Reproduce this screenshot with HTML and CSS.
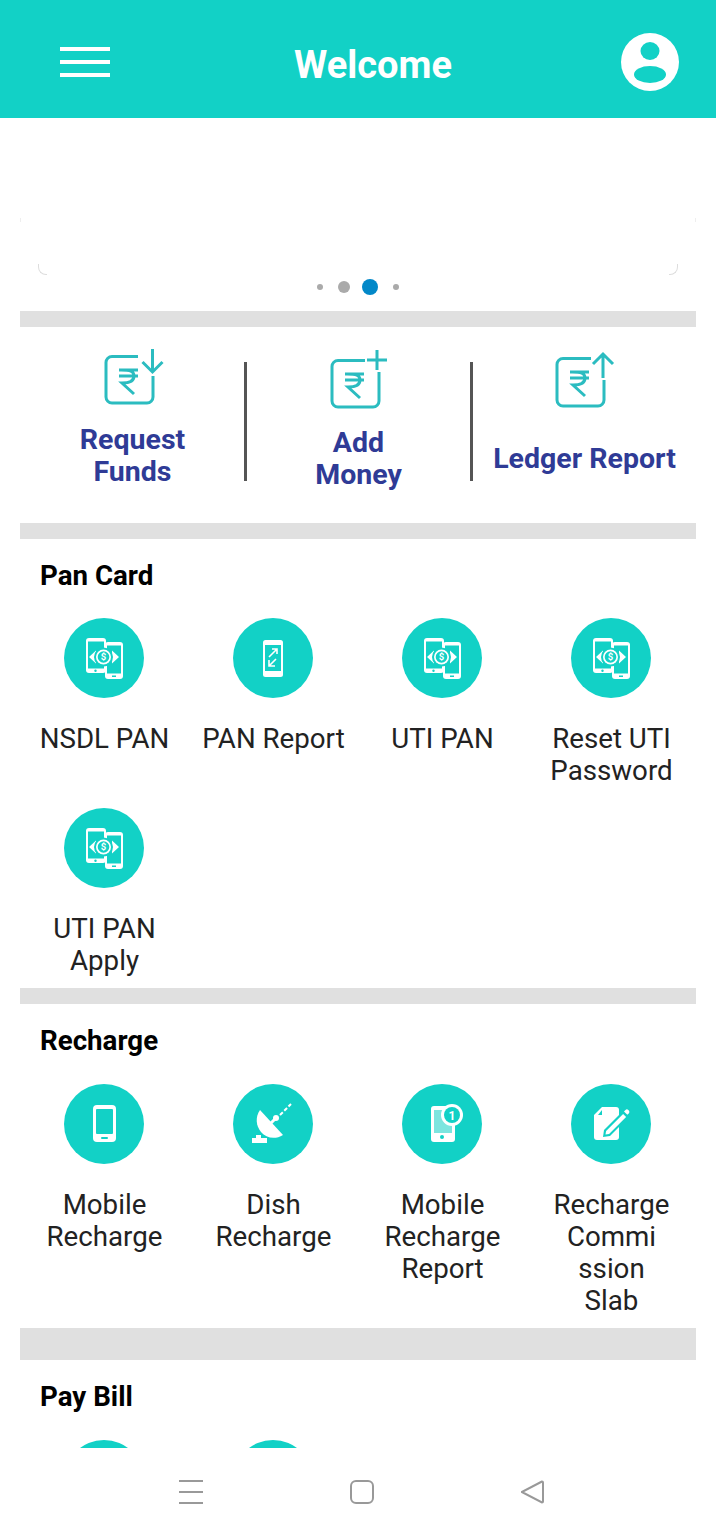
FILE: index.html
```html
<!DOCTYPE html>
<html>
<head>
    <meta http-equiv="Content-Type" content="text/html; charset=utf-8" />
    <title>Welcome</title>
    <link rel="stylesheet" href="styles.css">
</head>
<body>
    <header class="topbar">
        <div class="burger"><span></span><span></span><span></span></div>
        <h1 class="topbar-title">Welcome</h1>
        <svg class="avatar" width="58" height="58" viewBox="0 0 58 58">
            <circle cx="29" cy="29" r="29" fill="#fff" />
            <ellipse cx="29" cy="18" rx="9.500" ry="9" fill="#12d1c6" />
            <ellipse cx="29" cy="41.500" rx="16" ry="8.500" fill="#12d1c6" />
        </svg>
    </header>

    <main class="content">
        <div class="banner">
            <div class="banner-edge"><span></span><span></span></div>
            <div class="banner-corners"><span></span><span></span></div>
            <div class="dots">
                <span class="dot"></span>
                <span class="dot big"></span>
                <span class="dot current"></span>
                <span class="dot"></span>
            </div>
        </div>
        <div class="bar"></div>

        <div class="wallet">
            <div class="wallet-item first">
                <svg class="wallet-ico" width="60" height="60" viewBox="0 0 60 60">
                    <path d="M34 8.500H8a6 6 0 0 0-6 6V49a6 6 0 0 0 6 6h35a6 6 0 0 0 6-6V28" class="line" />
                    <path d="M48.500 1v22M38.500 14l10 10 10-10" class="line" />
                    <path d="M15 22h19M15 28h19M17 22c9 0 13 1 13 6s-5 7-12 7l12 11" class="line" />
                </svg>
                <div class="wallet-name">Request<br>Funds</div>
            </div>
            <div class="wallet-sep"></div>
            <div class="wallet-item second">
                <svg class="wallet-ico" width="60" height="60" viewBox="0 0 60 60">
                    <path d="M35 10.500H8a6 6 0 0 0-6 6V51a6 6 0 0 0 6 6h35a6 6 0 0 0 6-6V22" class="line" />
                    <path d="M47 0v20M37 10h20" class="line" />
                    <path d="M15 24h19M15 30h19M17 24c9 0 13 1 13 6s-5 7-12 7l12 11" class="line" />
                </svg>
                <div class="wallet-name">Add<br>Money</div>
            </div>
            <div class="wallet-sep"></div>
            <div class="wallet-item third">
                <svg class="wallet-ico" width="60" height="60" viewBox="0 0 60 60">
                    <path d="M35 6.500H7a6 6 0 0 0-6 6V48a6 6 0 0 0 6 6h35a6 6 0 0 0 6-6V28" class="line" />
                    <path d="M47 26V2M37 12L47 2l10 10" class="line" />
                    <path d="M14 20h19M14 26h19M16 20c9 0 13 1 13 6s-5 7-12 7l12 11" class="line" />
                </svg>
                <div class="wallet-name">Ledger Report</div>
            </div>
        </div>
        <div class="bar"></div>

        <section class="group">
            <h2 class="group-title">Pan Card</h2>
            <ul class="tiles">
                <li>
                    <span class="tile-ico">
                        <svg width="80" height="80" viewBox="0 0 80 80">
                            <rect x="22" y="20" width="20" height="35" rx="3" fill="#fff" />
                            <rect x="24" y="23.500" width="16" height="27" fill="#12d1c6" />
                            <circle cx="31.500" cy="52.800" r="1.200" fill="#12d1c6" />
                            <rect x="41" y="24" width="18" height="37" rx="3" fill="#fff" />
                            <rect x="43" y="27.500" width="14" height="28" fill="#12d1c6" />
                            <rect x="48" y="57.500" width="4" height="1.500" fill="#12d1c6" />
                            <path d="M25 39l7-6.500V36h4v6h-4v3.500zM55 39l-7-6.500V36h-4v6h4v3.500z" fill="#fff" />
                            <circle cx="39.500" cy="39" r="9.500" fill="#12d1c6" />
                            <circle cx="39.500" cy="39" r="7.500" fill="#fff" />
                            <circle cx="39.500" cy="39" r="5.800" fill="#12d1c6" />
                            <text x="39.500" y="42.300" class="ico-text" font-size="9.500">$</text>
                        </svg>
                    </span>NSDL PAN
                </li>
                <li>
                    <span class="tile-ico">
                        <svg width="80" height="80" viewBox="0 0 80 80">
                            <rect x="30" y="22" width="20" height="37" rx="2.500" fill="#fff" />
                            <rect x="32" y="27" width="16" height="26" fill="#12d1c6" />
                            <path d="M36 39l8-8M39 31h5v5M43 41l-7 7M36 42v6h6" fill="none" stroke="#fff" stroke-width="1.600" />
                        </svg>
                    </span>PAN Report
                </li>
                <li>
                    <span class="tile-ico">
                        <svg width="80" height="80" viewBox="0 0 80 80">
                            <rect x="22" y="20" width="20" height="35" rx="3" fill="#fff" />
                            <rect x="24" y="23.500" width="16" height="27" fill="#12d1c6" />
                            <circle cx="31.500" cy="52.800" r="1.200" fill="#12d1c6" />
                            <rect x="41" y="24" width="18" height="37" rx="3" fill="#fff" />
                            <rect x="43" y="27.500" width="14" height="28" fill="#12d1c6" />
                            <rect x="48" y="57.500" width="4" height="1.500" fill="#12d1c6" />
                            <path d="M25 39l7-6.500V36h4v6h-4v3.500zM55 39l-7-6.500V36h-4v6h4v3.500z" fill="#fff" />
                            <circle cx="39.500" cy="39" r="9.500" fill="#12d1c6" />
                            <circle cx="39.500" cy="39" r="7.500" fill="#fff" />
                            <circle cx="39.500" cy="39" r="5.800" fill="#12d1c6" />
                            <text x="39.500" y="42.300" class="ico-text" font-size="9.500">$</text>
                        </svg>
                    </span>UTI PAN
                </li>
                <li>
                    <span class="tile-ico">
                        <svg width="80" height="80" viewBox="0 0 80 80">
                            <rect x="22" y="20" width="20" height="35" rx="3" fill="#fff" />
                            <rect x="24" y="23.500" width="16" height="27" fill="#12d1c6" />
                            <circle cx="31.500" cy="52.800" r="1.200" fill="#12d1c6" />
                            <rect x="41" y="24" width="18" height="37" rx="3" fill="#fff" />
                            <rect x="43" y="27.500" width="14" height="28" fill="#12d1c6" />
                            <rect x="48" y="57.500" width="4" height="1.500" fill="#12d1c6" />
                            <path d="M25 39l7-6.500V36h4v6h-4v3.500zM55 39l-7-6.500V36h-4v6h4v3.500z" fill="#fff" />
                            <circle cx="39.500" cy="39" r="9.500" fill="#12d1c6" />
                            <circle cx="39.500" cy="39" r="7.500" fill="#fff" />
                            <circle cx="39.500" cy="39" r="5.800" fill="#12d1c6" />
                            <text x="39.500" y="42.300" class="ico-text" font-size="9.500">$</text>
                        </svg>
                    </span>Reset UTI<br>Password
                </li>
                <li>
                    <span class="tile-ico">
                        <svg width="80" height="80" viewBox="0 0 80 80">
                            <rect x="22" y="20" width="20" height="35" rx="3" fill="#fff" />
                            <rect x="24" y="23.500" width="16" height="27" fill="#12d1c6" />
                            <circle cx="31.500" cy="52.800" r="1.200" fill="#12d1c6" />
                            <rect x="41" y="24" width="18" height="37" rx="3" fill="#fff" />
                            <rect x="43" y="27.500" width="14" height="28" fill="#12d1c6" />
                            <rect x="48" y="57.500" width="4" height="1.500" fill="#12d1c6" />
                            <path d="M25 39l7-6.500V36h4v6h-4v3.500zM55 39l-7-6.500V36h-4v6h4v3.500z" fill="#fff" />
                            <circle cx="39.500" cy="39" r="9.500" fill="#12d1c6" />
                            <circle cx="39.500" cy="39" r="7.500" fill="#fff" />
                            <circle cx="39.500" cy="39" r="5.800" fill="#12d1c6" />
                            <text x="39.500" y="42.300" class="ico-text" font-size="9.500">$</text>
                        </svg>
                    </span>UTI PAN<br>Apply
                </li>
            </ul>
        </section>
        <div class="bar"></div>

        <section class="group tall">
            <h2 class="group-title">Recharge</h2>
            <ul class="tiles">
                <li>
                    <span class="tile-ico">
                        <svg width="80" height="80" viewBox="0 0 80 80">
                            <rect x="29" y="21" width="23" height="37" rx="4" fill="#fff" />
                            <rect x="32" y="25" width="17" height="25" rx="1" fill="#12d1c6" />
                            <rect x="37" y="53" width="7" height="2" rx="1" fill="#12d1c6" />
                        </svg>
                    </span>Mobile<br>Recharge
                </li>
                <li>
                    <span class="tile-ico">
                        <svg width="80" height="80" viewBox="0 0 80 80">
                            <path d="M27 26L50 51C42 56 33 54 28 48 23 42 22 33 27 26z" fill="#fff" />
                            <path d="M37 40l6-6" stroke="#fff" stroke-width="3" />
                            <circle cx="43" cy="34" r="3" fill="#fff" />
                            <path d="M47 31l11-11" stroke="#fff" stroke-width="2" stroke-dasharray="4 2" />
                            <rect x="19" y="54" width="15" height="5" fill="#fff" />
                            <rect x="23" y="51" width="5" height="3" fill="#fff" />
                        </svg>
                    </span>Dish<br>Recharge
                </li>
                <li>
                    <span class="tile-ico">
                        <svg width="80" height="80" viewBox="0 0 80 80">
                            <rect x="29" y="22" width="24" height="36" rx="3" fill="#fff" />
                            <rect x="32" y="26" width="18" height="23" fill="#7de5df" />
                            <circle cx="40" cy="53" r="2" fill="#12d1c6" />
                            <circle cx="50" cy="31" r="11" fill="#fff" />
                            <circle cx="50" cy="31" r="8" fill="#12d1c6" />
                            <text x="50" y="35.500" class="ico-text" font-size="12">1</text>
                        </svg>
                    </span>Mobile<br>Recharge<br>Report
                </li>
                <li>
                    <span class="tile-ico">
                        <svg width="80" height="80" viewBox="0 0 80 80">
                            <path d="M31 23H45a3 3 0 0 1 3 3V53a3 3 0 0 1-3 3H26a3 3 0 0 1-3-3V31z" fill="#fff" />
                            <path d="M31 26v5h-4z" fill="#12d1c6" />
                            <path d="M32 53l1-7 19-19 6 6-19 19z" fill="#12d1c6" />
                            <path d="M34.500 50.500l.6-3.500 17-17 3 3-17 17z" fill="#fff" />
                            <path d="M53 27.500l1.500-1.500a2 2 0 0 1 2.800 0l.5.5a2 2 0 0 1 0 2.800l-1.500 1.500z" fill="#fff" />
                        </svg>
                    </span>Recharge<br>Commi<br>ssion<br>Slab
                </li>
            </ul>
        </section>
        <div class="bar"></div>
        <div class="bar"></div>

        <section class="group tall">
            <h2 class="group-title">Pay Bill</h2>
            <ul class="tiles">
                <li><span class="tile-ico"></span></li>
                <li><span class="tile-ico"></span></li>
            </ul>
        </section>
    </main>

    <nav class="sysnav">
        <svg width="24" height="24" viewBox="0 0 24 24">
            <path d="M0 1h24M0 12h24M0 23h24" class="navline" />
        </svg>
        <svg width="24" height="24" viewBox="0 0 24 24">
            <rect x="1" y="1" width="22" height="22" rx="5" class="navline" />
        </svg>
        <svg width="24" height="24" viewBox="0 0 24 24">
            <path d="M21 1.500L.8 12 21 22.500c.5 0 1-.5 1-1V2.500c0-.5-.5-1-1-1z" class="navline" />
        </svg>
    </nav>
</body>
</html>
```

FILE: styles.css
```css
html,
body {
    margin: 0;
    padding: 0;
}

body {
    width: 716px;
    height: 1536px;
    display: flex;
    flex-direction: column;
    overflow: hidden;
    background-color: white;
    font-family: Roboto, "Liberation Sans", sans-serif;
    color: #222;
}

.ico-text {
    font-family: Roboto, sans-serif;
    font-weight: bold;
    text-anchor: middle;
    fill: white;
}

/* top bar */
.topbar {
    flex: none;
    height: 118px;
    padding: 0 37px 0 60px;
    display: flex;
    align-items: center;
    justify-content: space-between;
    background-color: #12d1c6;
    box-sizing: border-box;
}

.burger {
    width: 50px;
    display: flex;
    flex-direction: column;
    gap: 9px;
    margin-top: 6px;
}

.burger span {
    display: block;
    height: 4px;
    background-color: white;
}

.topbar-title {
    margin: 12px 0 0 15px;
    font-size: 38px;
    font-weight: bold;
    color: white;
}

.avatar {
    display: block;
    margin-top: 6px;
}

/* content */
.content {
    flex: 1;
    min-height: 0;
    overflow: hidden;
}

.banner {
    height: 193px;
    padding: 100px 20px 0;
    box-sizing: border-box;
}

.banner-edge {
    height: 4px;
    display: flex;
    justify-content: space-between;
}

.banner-edge span {
    width: 1px;
    background-color: #eee;
}

.banner-corners {
    margin: 42px 18px 0;
    display: flex;
    justify-content: space-between;
}

.banner-corners span {
    width: 8px;
    height: 10px;
    border-left: 1px solid #ddd;
    border-bottom: 1px solid #ddd;
    border-radius: 0 0 0 8px;
}

.banner-corners span:last-child {
    transform: scaleX(-1);
}

.dots {
    margin-top: 4px;
    display: flex;
    align-items: center;
    justify-content: center;
    gap: 15px;
}

.dot {
    width: 6px;
    height: 6px;
    border-radius: 50%;
    background-color: #aaa;
}

.dot.big {
    width: 12px;
    height: 12px;
}

.dot.current {
    width: 16px;
    height: 16px;
    margin-left: -3px;
    background-color: #0288c8;
}

.bar {
    height: 16px;
    margin: 0 20px;
    background-color: #e0e0e0;
}

/* wallet row */
.wallet {
    height: 196px;
    margin: 0 20px;
    padding-left: 1px;
    display: flex;
    align-items: flex-start;
}

.wallet-item {
    flex: 1;
    min-width: 0;
    display: flex;
    flex-direction: column;
    align-items: center;
    text-align: center;
}

.wallet-item.first {
    padding-top: 21px;
}

.wallet-item.second {
    padding-top: 23px;
}

.wallet-item.third {
    padding-top: 25px;
}

.wallet-ico {
    display: block;
    margin-left: 3px;
    overflow: visible;
}

.line {
    fill: none;
    stroke: #2bbcc0;
    stroke-width: 3;
}

.wallet-name {
    margin-top: 16px;
    font-size: 28.500px;
    line-height: 32px;
    font-weight: bold;
    color: #2f3b96;
    white-space: nowrap;
}

.wallet-item.second .wallet-name {
    margin-top: 17px;
}

.wallet-item.third .wallet-name {
    margin-top: 31px;
}

.wallet-sep {
    flex: none;
    width: 3px;
    height: 119px;
    margin-top: 35px;
    background-color: #555;
}

/* groups of tiles */
.group {
    padding: 21px 20px 11px;
}

.group-title {
    margin: 0 0 26px 20px;
    font-size: 27.700px;
    line-height: 32px;
    font-weight: bold;
    color: #000;
}

.group.tall .group-title {
    margin-bottom: 27px;
}

.tiles {
    margin: 0;
    padding: 0;
    list-style-type: none;
    display: grid;
    grid-template-columns: repeat(4, 1fr);
    row-gap: 21px;
}

.tiles li {
    text-align: center;
    font-size: 27.700px;
    line-height: 32px;
    white-space: nowrap;
}

.tile-ico {
    display: block;
    width: 80px;
    height: 80px;
    margin: 0 0 25px 44px;
    border-radius: 50%;
    background-color: #12d1c6;
}

.tile-ico svg {
    display: block;
}

/* phone nav */
.sysnav {
    flex: none;
    height: 88px;
    padding: 32px 0 0 8px;
    box-sizing: border-box;
    display: flex;
    align-items: flex-start;
    justify-content: center;
    gap: 147px;
    background-color: white;
}

.navline {
    fill: none;
    stroke: #999;
    stroke-width: 2;
}
```
